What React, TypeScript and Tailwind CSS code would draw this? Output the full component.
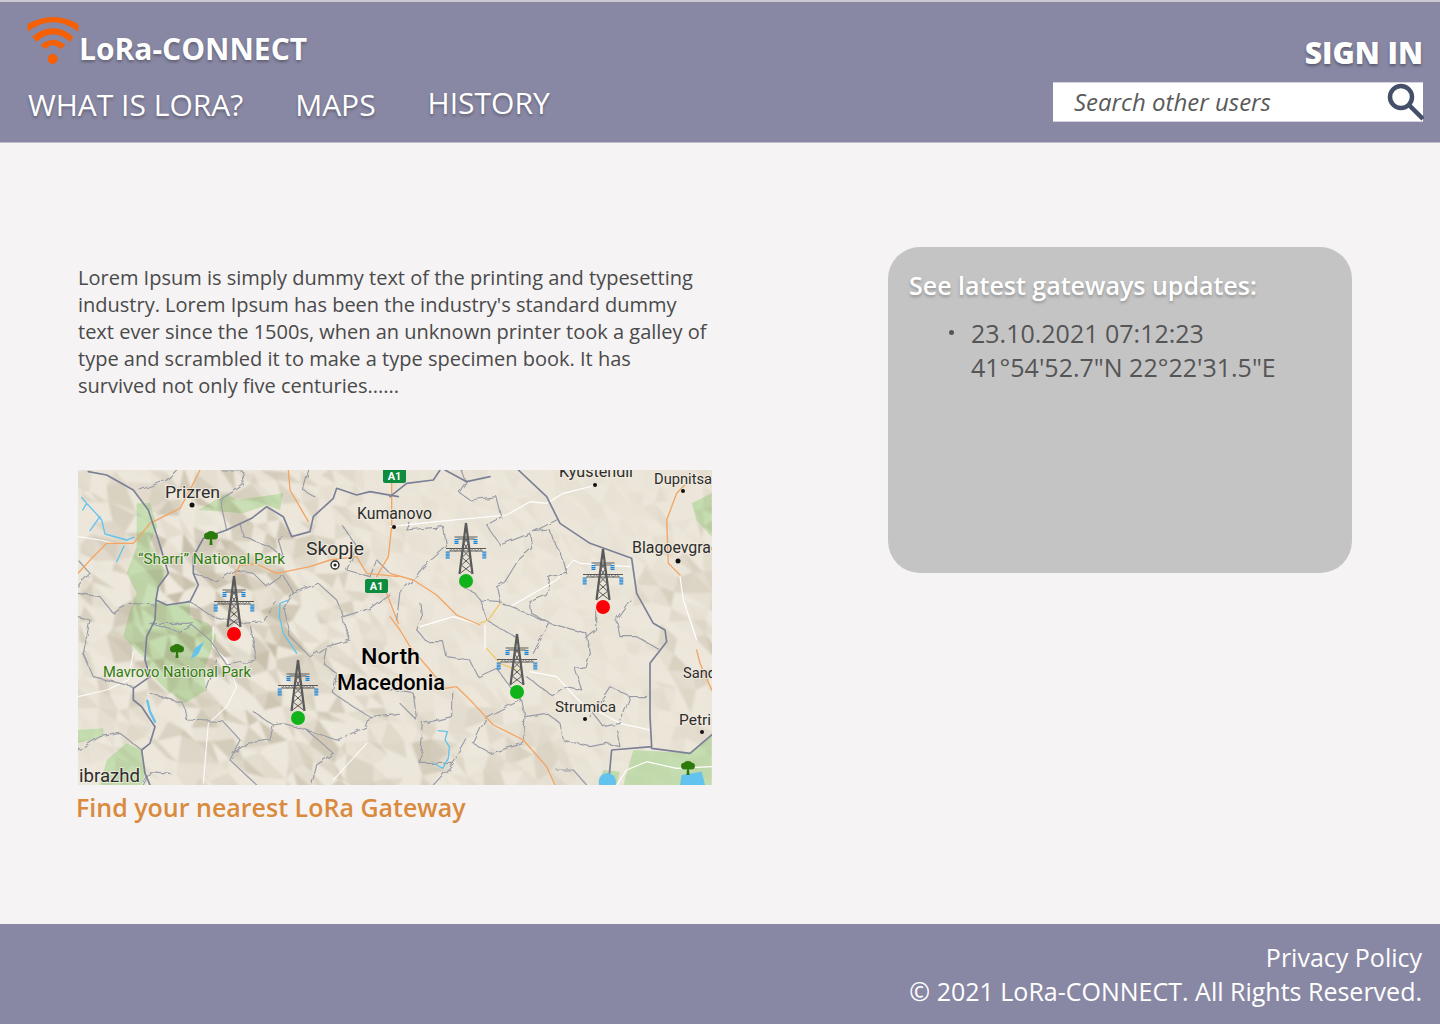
const openSans = { fontFamily: '"Open Sans", sans-serif' };

// seeded low-poly hillshade so the map has the same faceted look
function facets() {
  let seed = 7;
  const rnd = () => {
    seed = (seed * 16807) % 2147483647;
    return seed / 2147483647;
  };
  const out: { d: string; fill: string }[] = [];
  const size = 17;
  const pts: [number, number][][] = [];
  for (let r = 0; r <= 20; r++) {
    const row: [number, number][] = [];
    for (let c = 0; c <= 39; c++) {
      row.push([c * size + (rnd() - 0.5) * 13, r * size + (rnd() - 0.5) * 13]);
    }
    pts.push(row);
  }
  const rough = (x: number, y: number) => {
    const west = Math.max(0, 1 - Math.hypot((x - 130) / 200, (y - 130) / 230));
    const south = Math.max(0, 1 - Math.hypot((x - 330) / 210, (y - 290) / 90));
    const east = Math.max(0, 1 - Math.hypot((x - 620) / 80, (y - 130) / 170));
    return Math.min(1, west * 1.3 + south * 0.8 + east * 0.8 + 0.14);
  };
  for (let r = 0; r < 20; r++) {
    for (let c = 0; c < 39; c++) {
      const a = pts[r][c], b = pts[r][c + 1], d = pts[r + 1][c], e = pts[r + 1][c + 1];
      [[a, b, e], [a, e, d]].forEach((t) => {
        const k = rough(t[0][0], t[0][1]);
        const v = rnd() * k;
        const shade = rnd() > 0.35;
        const fill = shade ? "#8f8262" : "#f8f4ea";
        out.push({
          d: `M${t[0].join(" ")}L${t[1].join(" ")}L${t[2].join(" ")}Z`,
          fill: `${fill}${Math.round((shade ? 0.42 : 0.18) * v * 255).toString(16).padStart(2, "0")}`,
        });
      });
    }
  }
  return out;
}

const terrain = facets();

function Tower({ x, y, on }: { x: number; y: number; on: boolean }) {
  return (
    <g transform={`translate(${x - 20.5} ${y - 58})`}>
      <g fill="none" stroke="#5a5a5a">
        <path d="M20.5 0 L14 51 M20.5 0 L27 51" strokeWidth="2.2" />
        <path d="M15 50 L25.5 42 M26 50 L15.5 42 M16 42 L25 34 M25 42 L16 34 M17 34 L24 27 M24 34 L17 27 M18 27 L23 20 M23 27 L18 20 M18.5 20 L22.5 14 M22.5 20 L18.5 14" strokeWidth="1" />
        <path d="M0.5 25.5 H40.5 M4 28 H37" strokeWidth="1.2" />
        <path d="M4 28 L7 25.5 L10 28 L13 25.5 L16 28 M37 28 L34 25.5 L31 28 L28 25.5 L25 28" strokeWidth="0.7" />
        <path d="M9 14 H32 M12 16 H29" strokeWidth="1" />
      </g>
      <g fill="none" stroke="#1a84d8" strokeDasharray="1.3 0.6">
        <path d="M2.2 28.5 V35.5 M38.8 28.5 V35.5" strokeWidth="4" />
        <path d="M11 16 V21 M30 16 V21" strokeWidth="4" />
      </g>
      <circle cx="20.5" cy="58" r="7" fill={on ? "#10b31a" : "#fb0007"} />
    </g>
  );
}

function Park({ x, y }: { x: number; y: number }) {
  return (
    <g transform={`translate(${x} ${y})`} fill="#2b7a0b">
      <path d="M-1 1 H1 L1.5 8 H-1.5 Z" />
      <ellipse cx="-3" cy="-1" rx="4" ry="3.5" />
      <ellipse cx="3" cy="-1" rx="4" ry="3.5" />
      <ellipse cx="0" cy="-3" rx="4" ry="3" />
    </g>
  );
}

function MapLabel({ x, y, size = 16, width, fill = "#2d2d2d", weight = 400, children }: { x: number; y: number; size?: number; width: number; fill?: string; weight?: number; children: string }) {
  return (
    <text x={x} y={y} fontSize={size} fill={fill} fontWeight={weight} fontFamily='"Roboto", sans-serif' textLength={width} lengthAdjust="spacingAndGlyphs" stroke="#f1ece1" strokeOpacity="0.8" strokeWidth="2" paintOrder="stroke">
      {children}
    </text>
  );
}

function Shield({ x, y }: { x: number; y: number }) {
  return (
    <g transform={`translate(${x} ${y})`}>
      <rect width="23" height="14" rx="2" fill="#0d8b3f" />
      <text x="11.5" y="11" textAnchor="middle" fontSize="11" fontWeight="700" fill="#fff" fontFamily='"Roboto", sans-serif'>A1</text>
    </g>
  );
}

function GatewayMap() {
  return (
    <svg viewBox="0 0 634 315" className="block w-[634px] h-[315px]">
      <defs>
        <filter id="soft" x="-2%" y="-2%" width="104%" height="104%">
          <feGaussianBlur stdDeviation="1.2" />
        </filter>
        <filter id="softer" x="-5%" y="-5%" width="110%" height="110%">
          <feGaussianBlur stdDeviation="2.2" />
        </filter>
        <filter id="wiggle" x="-2%" y="-2%" width="104%" height="104%">
          <feTurbulence type="fractalNoise" baseFrequency="0.035" numOctaves="2" seed="4" result="n" />
          <feDisplacementMap in="SourceGraphic" in2="n" scale="16" />
        </filter>
      </defs>
      <rect width="634" height="315" fill="#ece6da" />

      <g transform="translate(-8 -10) scale(0.33333)" fill="#c3dcae" filter="url(#softer)">
        <path d="M200 130 L240 130 L262 200 L240 250 L290 340 L265 380 L258 420 L290 435 L360 425 L360 470 L415 490 L440 530 L420 580 L400 640 L410 690 L345 730 L290 690 L250 650 L228 600 L160 530 L180 450 L200 400 L170 340 L200 260 Z" />
        <path d="M385 150 L470 100 L500 120 L640 100 L630 150 L590 135 L520 160 Z" />
        <path d="M24 810 L100 805 L100 830 L24 850 Z" />
        <path d="M110 900 L170 850 L215 870 L225 940 L215 975 L90 975 Z" />
      </g>
      <g transform="translate(312 -10) scale(0.33333)" fill="#c3dcae" filter="url(#softer)">
        <path d="M730 870 L900 880 L965 825 L965 975 L700 975 Z" />
        <path d="M905 130 L965 100 L965 230 L920 180 Z" />
        <path d="M625 975 L640 930 L690 935 L680 975 Z" />
      </g>

      <g filter="url(#soft)">
        {terrain.map((t, i) => (
          <path key={i} d={t.d} fill={t.fill} />
        ))}
      </g>

      {/* left half is in zoomed-crop coordinates */}
      <g transform="translate(-8 -10) scale(0.33333)" fill="none" strokeLinejoin="round" strokeLinecap="round">
        <g stroke="#fff" strokeWidth="3.5" strokeOpacity="0.85">
          <path d="M24 230 L90 240 L130 250 M430 500 L428 560 L470 600 L500 680 L470 740 L415 790 L400 970 M24 710 L110 690 L175 660 L190 575 M790 960 L890 850" />
        </g>
        <g stroke="#999ca7" strokeWidth="3.5" filter="url(#wiggle)">
          <path d="M24 400 L90 410 L130 460 L180 430 L255 435 M24 470 L60 480 L40 580 L70 650 L190 680 M370 340 L440 365 L495 330 L550 340 L590 380 L640 345 L670 400 L745 370 L800 420 L820 470 L900 445 L960 400 M360 425 L430 470 L520 490 L580 485 L620 425 M540 490 L560 600 L470 615 L420 540 L360 490 L240 490 M240 490 L325 515 L370 490 M410 690 L440 600 M340 730 L350 780 L460 785 L510 840 L480 900 L560 975 M550 755 L610 795 L640 790 L710 810 L790 880 L740 915 L725 975 M610 795 L600 840 L530 850 L490 880 M710 810 L800 840 L890 800 L900 770 L985 760 M770 560 L760 610 L800 640 L790 700 L850 740 L900 770 M670 400 L640 445 L660 530 L720 590 L770 560 M815 470 L840 540 L770 560 M215 870 L150 820 L90 830 L24 870 M240 700 L340 730 M220 975 L240 935 L300 940 M720 15 L700 90 L735 110 M820 200 L860 260 L830 330 L900 350 L920 300 L960 340 M640 230 L625 240 L640 290 L600 260 L520 230 L510 190 M210 90 L290 60 L320 30 M455 30 L515 30 L520 75 L450 120 L470 210 M24 300 L60 340 L20 380" />
        </g>
        <g stroke="#f3a564" strokeWidth="4">
          <path d="M24 340 L70 290 L110 250 L190 250 L240 190 L330 145 L365 80 L390 30 M655 30 L660 90 L715 185 M495 345 L510 315 L560 312 L620 340 L720 320 L780 300 L860 290 L890 340 L985 350 M965 30 L965 200 L955 290 L920 350 M950 400 L985 490" />
        </g>
        <g stroke="#7b8096" strokeWidth="5">
          <path d="M55 35 L110 45 L190 90 L235 150 L265 240 L295 340 L265 380 L258 420 L290 435 L360 425 L385 375 L370 340 L370 290 L400 235 L470 210 L545 175 L590 140 L640 170 L665 230 L720 215 L730 170 L790 115 L800 85 L860 105 L900 95 L985 110" />
          <path d="M258 420 L255 480 L230 530 L225 600 L240 650 L190 685 L190 720 L215 740 L255 800 L240 850 L215 870 L225 940 L240 975" />
        </g>
        <g stroke="#62c3ee" strokeWidth="4">
          <path d="M35 112 L50 130 L38 150 M50 130 L78 160 L95 180 L105 222 L170 240 L192 232 M90 170 L60 212 M162 258 L140 305" />
          <path d="M630 430 L628 470 L640 520 L680 580 M630 430 L655 420" />
          <path d="M232 722 L240 755 L255 785" strokeWidth="7" />
        </g>
        <path d="M402 545 L375 565 L362 598 L385 582 Z" fill="#62c3ee" />
      </g>

      {/* right half */}
      <g transform="translate(312 -10) scale(0.33333)" fill="none" strokeLinejoin="round" strokeLinecap="round">
        <g stroke="#fff" strokeWidth="3.5">
          <path d="M0 200 L140 185 L350 165 L420 125 L470 130 L520 100 L620 75 M90 500 L190 470 L270 495 M285 495 L285 565 M360 440 L500 360 L550 300 L570 310 L720 320 M420 635 L500 650 L570 725 L690 790 L780 810 M870 350 L880 420 L920 540 M680 975 L710 930 L770 905 L860 925 L965 920" />
        </g>
        <g stroke="#999ca7" strokeWidth="3.5" filter="url(#wiggle)">
          <path d="M215 30 L230 70 L210 100 L240 120 L320 110 L335 170 L290 195 L330 255 L420 220 L425 265 L385 300 L345 365 L320 380 L330 425 L270 420 L255 400 L225 385 M60 190 L50 210 L160 200 L170 260 L100 320 L70 360 L30 395 L20 480 M500 180 L430 215 L480 210 L490 240 L520 300 L530 340 L480 350 L470 405 L420 425 L425 460 L480 490 L445 550 L430 580 M480 490 L590 520 L600 570 L585 620 L555 625 L575 690 L530 680 L490 710 L410 650 M335 430 L410 460 L480 490 M270 420 L290 480 L390 540 M620 450 L620 510 L590 535 M680 480 L690 530 L740 530 L810 570 M720 420 L680 475 M90 430 L95 470 L80 510 L110 545 L160 545 L170 590 L240 600 L265 650 L320 625 L360 680 L395 720 L405 770 L470 760 L510 790 L520 840 L600 860 L650 850 L690 860 L680 810 M0 690 L70 700 L80 780 L30 730 M185 690 L185 770 L100 790 L90 910 L190 910 L230 840 M405 770 L400 850 L300 880 L250 850 L290 770 L340 745 L395 720 M660 680 L720 710 L770 710 M720 710 L690 790 L640 800 L610 760 M660 680 L600 770 M500 930 L550 930 L590 975 M190 910 L130 975" />
        </g>
        <g stroke="#f3a564" strokeWidth="4">
          <path d="M0 340 L70 360 L140 405 L200 465 L270 495 M0 470 L30 510 L60 560 L120 630 L165 685 L200 680 L250 730 L310 795 L400 840 L470 920 L495 975 M890 70 L860 100 L830 180 L835 310 L870 345 M920 570 L930 610 L965 690" />
        </g>
        <g stroke="#f0c65a" strokeWidth="3.5">
          <path d="M270 490 L295 480 L330 430 M290 565 L330 610 L380 630" />
        </g>
        <g stroke="#7b8096" strokeWidth="5">
          <path d="M0 110 L50 70 L130 60 L150 30 M165 30 L230 65 L300 50 M385 30 L470 110 L510 190 L600 250 L725 295 L740 400 L790 490 L825 510 L830 545 L780 610 L780 770 L785 860 L665 870 L655 975 M785 865 L900 880 L965 825" />
        </g>
        <g fill="#62c3ee">
          <path d="M145 812 L172 815 L165 840 L178 860 L175 895 L158 925 L135 912" stroke="#62c3ee" strokeWidth="4" fill="none" />
          <circle cx="652" cy="965" r="26" />
          <path d="M875 945 L935 935 L945 975 L870 975 Z" />
        </g>
      </g>

      <Shield x={305} y={-1} />
      <Shield x={287} y={109} />
      <Park x={133} y={67} />
      <Park x={99} y={180} />
      <Park x={610} y={297} />

      <circle cx="114" cy="35" r="2.5" fill="#111" />
      <circle cx="316" cy="57" r="2" fill="#111" />
      <circle cx="517" cy="15" r="2" fill="#111" />
      <circle cx="605" cy="21" r="2" fill="#111" />
      <circle cx="600" cy="91" r="2.5" fill="#111" />
      <circle cx="507" cy="249" r="2" fill="#111" />
      <circle cx="624" cy="262" r="2" fill="#111" />
      <circle cx="257" cy="95" r="4" fill="#fff" stroke="#222" strokeWidth="1.3" />
      <circle cx="257" cy="95" r="1.6" fill="#222" />

      <MapLabel x={87} y={28} width={55}>Prizren</MapLabel>
      <MapLabel x={279} y={49} width={75}>Kumanovo</MapLabel>
      <MapLabel x={228} y={85} size={19} width={58}>Skopje</MapLabel>
      <MapLabel x={481} y={7} width={74}>Kyustendil</MapLabel>
      <MapLabel x={576} y={14} size={15} width={58}>Dupnitsa</MapLabel>
      <MapLabel x={554} y={83} width={88}>Blagoevgrad</MapLabel>
      <MapLabel x={605} y={208} size={15} width={33}>Sand</MapLabel>
      <MapLabel x={601} y={255} size={15} width={32}>Petri</MapLabel>
      <MapLabel x={477} y={242} size={15} width={61}>Strumica</MapLabel>
      <MapLabel x={1} y={312} size={18} width={61}>ibrazhd</MapLabel>
      <MapLabel x={60} y={94} size={14} fill="#2e7d12" width={147}>“Sharri” National Park</MapLabel>
      <MapLabel x={25} y={207} size={14} fill="#2e7d12" width={148}>Mavrovo National Park</MapLabel>
      <MapLabel x={283} y={194} size={22} fill="#000" weight={500} width={59}>North</MapLabel>
      <MapLabel x={259} y={220} size={22} fill="#000" weight={500} width={108}>Macedonia</MapLabel>

      <Tower x={156} y={164} on={false} />
      <Tower x={388} y={111} on={true} />
      <Tower x={525} y={137} on={false} />
      <Tower x={439} y={222} on={true} />
      <Tower x={220} y={248} on={true} />
    </svg>
  );
}

export default function App() {
  return (
    <div className="w-[1440px] h-[1024px] flex flex-col bg-[#f5f3f4] overflow-hidden" style={openSans}>
      <header className="h-[143px] shrink-0 bg-[#8988a4] border-t-2 border-t-[#c9c8d3] border-b border-b-[#bdbccb] flex justify-between pl-[27px] pr-[17px]">
        <div className="flex flex-col">
          <div className="flex items-start h-[72px] pt-[13px]">
            <svg width="52" height="50" viewBox="7 5 52 50" className="shrink-0" fill="#f65f02">
              <path d="M7.7 14 Q33 0 58.3 14 L58.3 21.7 Q33 3 7.7 21.7 Z" />
              <path d="M12.3 26.7 Q33 10 53.3 26.7 L50 31.7 Q33 17 16.7 31.7 Z" />
              <path d="M20.7 35 Q33 25 45 35 L40.7 39.3 Q33 31 25 39.3 Z" />
              <circle cx="32.7" cy="49" r="5" />
            </svg>
            <span className="mt-[15px] text-[30px] leading-[38px] font-bold text-white [text-shadow:0_2px_3px_rgba(0,0,0,0.3)]">LoRa-CONNECT</span>
          </div>
          <nav className="flex items-start text-[30px] leading-[40px] font-normal text-white [text-shadow:0_2px_3px_rgba(0,0,0,0.3)] pl-[1px] mt-[11px]">
            <a className="whitespace-nowrap">WHAT IS LORA?</a>
            <a className="ml-[52px] whitespace-nowrap">MAPS</a>
            <a className="ml-[52px] -mt-[2px] whitespace-nowrap">HISTORY</a>
          </nav>
        </div>
        <div className="flex flex-col items-end">
          <a className="mt-[30px] text-[30px] leading-[41px] font-extrabold text-white [text-shadow:0_2px_3px_rgba(0,0,0,0.35)]">SIGN IN</a>
          <div className="mt-[9px] w-[370px] h-[40px] bg-white flex items-center justify-between pl-[21px] border-y border-[#d5d4de]">
            <span className="text-[24px] italic text-[#5a5a5a] leading-[32px]">Search other users</span>
            <svg width="38" height="38" viewBox="0 0 38 38" fill="none" stroke="#44506a" strokeWidth="4.5" className="-mr-[1px]">
              <circle cx="15" cy="14" r="11" />
              <path d="M23 22 L37 36" strokeLinecap="butt" />
            </svg>
          </div>
        </div>
      </header>

      <main className="flex-1 flex items-start pl-[78px]">
        <div className="w-[640px] pt-[121px]">
          <p className="text-[20px] leading-[27px] text-[#4a4a4a]">
            Lorem Ipsum is simply dummy text of the printing and typesetting<br />
            industry. Lorem Ipsum has been the industry's standard dummy<br />
            text ever since the 1500s, when an unknown printer took a galley of<br />
            type and scrambled it to make a type specimen book. It has<br />
            survived not only five centuries......
          </p>
          <div className="mt-[71px]">
            <GatewayMap />
          </div>
          <p className="mt-[5px] -ml-[2px] text-[25px] leading-[34px] font-semibold text-[#d98a3d]">Find your nearest LoRa Gateway</p>
        </div>
        <aside className="ml-[170px] mt-[104px] w-[464px] h-[326px] rounded-[32px] bg-[#c4c4c4] pl-[21px] pt-[20px]">
          <h2 className="text-[25px] leading-[36px] font-semibold text-white [text-shadow:0_2px_3px_rgba(0,0,0,0.25)]">See latest gateways updates:</h2>
          <ul className="mt-[13px] ml-[40px] text-[25px] leading-[34px] text-[#555555]">
            <li className="flex items-start gap-[17px]">
              <span className="mt-[14px] w-[5px] h-[5px] rounded-full bg-[#555555] shrink-0" />
              <span>23.10.2021 07:12:23<br />41°54'52.7"N 22°22'31.5"E</span>
            </li>
          </ul>
        </aside>
      </main>

      <footer className="h-[100px] shrink-0 bg-[#8988a4] pr-[18px] pt-[16px] text-right text-[25px] leading-[34px] font-normal text-white">
        <p>Privacy Policy</p>
        <p>© 2021 LoRa-CONNECT. All Rights Reserved.</p>
      </footer>
    </div>
  );
}
